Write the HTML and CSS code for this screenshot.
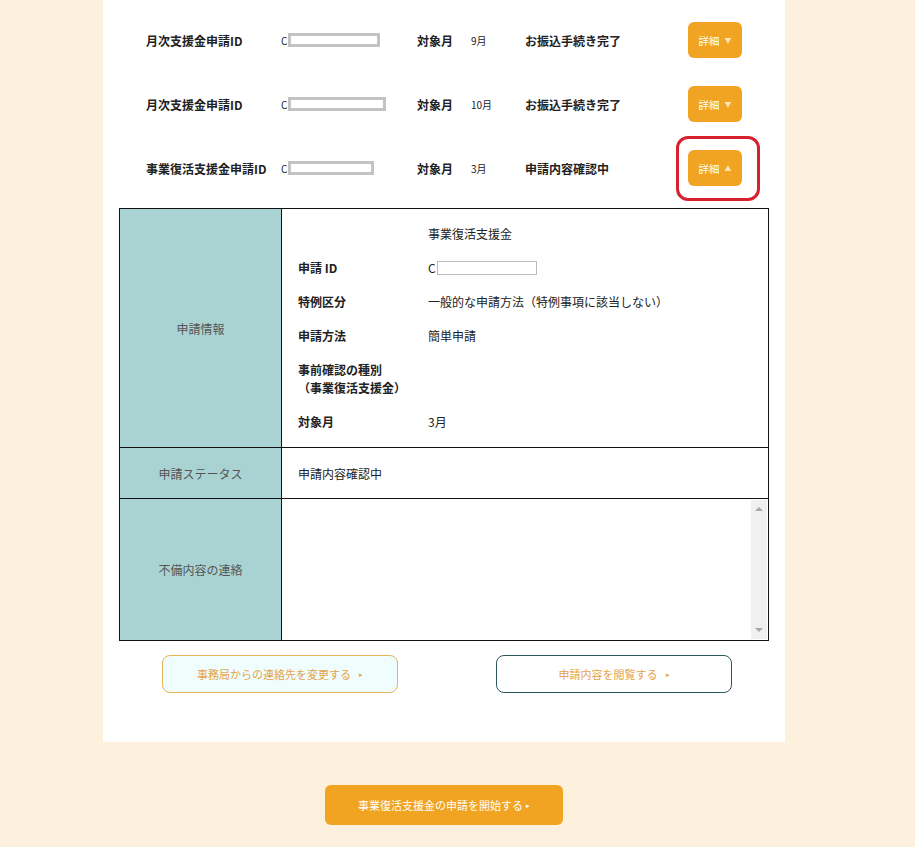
FILE: index.html
```html
<!DOCTYPE html>
<html lang="ja">
<head>
<meta charset="utf-8">
<link rel="stylesheet" href="styles.css">
</head>
<body>
<div class="page">
  <div class="panel">
    <div class="app-list">
      <div class="app-row">
        <div class="c-label">月次支援金申請ID</div>
        <div class="c-id">C<span class="mask" style="width:92px"></span></div>
        <div class="c-mlabel">対象月</div>
        <div class="c-month">9月</div>
        <div class="c-status">お振込手続き完了</div>
        <div class="c-btn"><button class="detail">詳細<span class="tri">▼</span></button></div>
      </div>
      <div class="app-row">
        <div class="c-label">月次支援金申請ID</div>
        <div class="c-id">C<span class="mask" style="width:98px"></span></div>
        <div class="c-mlabel">対象月</div>
        <div class="c-month">10月</div>
        <div class="c-status">お振込手続き完了</div>
        <div class="c-btn"><button class="detail">詳細<span class="tri">▼</span></button></div>
      </div>
      <div class="app-row">
        <div class="c-label">事業復活支援金申請ID</div>
        <div class="c-id">C<span class="mask" style="width:86px"></span></div>
        <div class="c-mlabel">対象月</div>
        <div class="c-month">3月</div>
        <div class="c-status">申請内容確認中</div>
        <div class="c-btn"><button class="detail">詳細<span class="tri">▲</span></button><span class="highlight"></span></div>
      </div>
    </div>

    <div class="detail-table">
      <div class="th th-info">申請情報</div>
      <div class="td td-info">
        <div class="kv"><div class="k"></div><div class="v">事業復活支援金</div></div>
        <div class="kv"><div class="k">申請 ID</div><div class="v">C<span class="idbox"></span></div></div>
        <div class="kv"><div class="k">特例区分</div><div class="v">一般的な申請方法（特例事項に該当しない）</div></div>
        <div class="kv"><div class="k">申請方法</div><div class="v">簡単申請</div></div>
        <div class="kv"><div class="k">事前確認の種別<br>（事業復活支援金）</div><div class="v"></div></div>
        <div class="kv"><div class="k">対象月</div><div class="v">3月</div></div>
      </div>
      <div class="th th-status">申請ステータス</div>
      <div class="td td-status">申請内容確認中</div>
      <div class="th th-msg">不備内容の連絡</div>
      <div class="td td-msg">
        <div class="msgbox"></div>
        <div class="sbar"><span class="sb-up"></span><span class="sb-down"></span></div>
      </div>
    </div>

    <div class="actions">
      <a class="btn-outline btn-contact">事務局からの連絡先を変更する<span class="arr">▸</span></a>
      <a class="btn-outline btn-view">申請内容を閲覧する<span class="arr">▸</span></a>
    </div>
  </div>
  <div class="bottom">
    <a class="btn-start">事業復活支援金の申請を開始する<span class="arr">▸</span></a>
  </div>
</div>
</body>
</html>
```
FILE: styles.css
```css
* { box-sizing: border-box; }
html, body { margin: 0; padding: 0; }
body {
  background: #fdf0dd;
  font-family: "Noto Sans CJK JP", "Liberation Sans", sans-serif;
  color: #222;
  font-size: 12px;
}
.page { width: 682px; margin-left: 103px; }
.panel {
  background: #fff;
  height: 742px;
  padding-top: 8px;
}
.app-list { padding-left: 43px; }
.app-row {
  display: flex;
  align-items: center;
  height: 64px;
}
.c-label { width: 135px; font-weight: bold; font-size: 12px; }
.c-id { width: 136px; font-size: 10px; display: flex; align-items: center; }
.mask {
  display: inline-block;
  height: 14px;
  border: 3px solid #c3c3c3;
  background: #fff;
  margin-left: 1px;
}
.c-mlabel { width: 54px; font-weight: bold; }
.c-month { width: 54px; font-size: 10px; }
.c-status { width: 163px; font-weight: bold; }
.c-btn { position: relative; }
.detail {
  width: 54px;
  height: 36px;
  border: none;
  border-radius: 6px;
  background: #f0a422;
  color: #fff;
  font-family: inherit;
  font-size: 10.5px;
  padding: 0;
  display: flex;
  align-items: center;
  justify-content: center;
}
.tri { font-size: 7px; margin-left: 5px; color: #fce3b8; }
.highlight {
  position: absolute;
  left: -12px;
  top: -14px;
  width: 84px;
  height: 65px;
  border: 3px solid #d8212e;
  border-radius: 12px;
}

.detail-table {
  margin: 8px 0 0 16px;
  width: 650px;
  display: grid;
  grid-template-columns: 162px 1fr;
  grid-template-rows: 239px 51px 141px;
  border: 1px solid #111;
}
.th {
  background: #a9d3d3;
  color: #555;
  display: flex;
  align-items: center;
  justify-content: center;
  border-right: 1px solid #111;
  font-size: 12px;
}
.td { background: #fff; }
.th-info, .td-info { border-bottom: 1px solid #111; }
.th-status, .td-status { border-bottom: 1px solid #111; }
.td-info { padding: 16px 0 0 16px; }
.kv { display: flex; margin-bottom: 16px; line-height: 18px; }
.k { width: 130px; font-weight: bold; }
.v { display: flex; align-items: center; }
.idbox {
  display: inline-block;
  width: 100px;
  height: 14px;
  border: 1px solid #bbb;
  margin-left: 1px;
}
.td-status { display: flex; align-items: center; padding-left: 16px; }
.td-msg { display: flex; }
.msgbox { flex: 1; }
.sbar {
  width: 16px;
  margin: 1px 1px 1px 0;
  background: #f0f0f0;
  position: relative;
}
.sb-up, .sb-down {
  position: absolute;
  left: 4px;
  width: 0; height: 0;
  border-left: 4px solid transparent;
  border-right: 4px solid transparent;
}
.sb-up { top: 7px; border-bottom: 4px solid #a8a8a8; }
.sb-down { bottom: 7px; border-top: 4px solid #a8a8a8; }

.actions {
  display: flex;
  gap: 98px;
  margin: 14px 0 0 59px;
}
.btn-outline {
  width: 236px;
  height: 38px;
  border-radius: 8px;
  display: flex;
  align-items: center;
  justify-content: center;
  color: #e6a24a;
  font-size: 11px;
}
.btn-contact { background: #effdfd; border: 1px solid #e8b456; }
.btn-view { background: #fff; border: 1px solid #2c5a5c; }
.arr { font-size: 7px; margin-left: 8px; }

.bottom { display: flex; justify-content: center; padding-top: 43px; }
.btn-start {
  width: 238px;
  height: 40px;
  border-radius: 6px;
  background: #f0a422;
  color: #fff;
  font-size: 11px;
  display: flex;
  align-items: center;
  justify-content: center;
}
.btn-start .arr { margin-left: 3px; }
```
